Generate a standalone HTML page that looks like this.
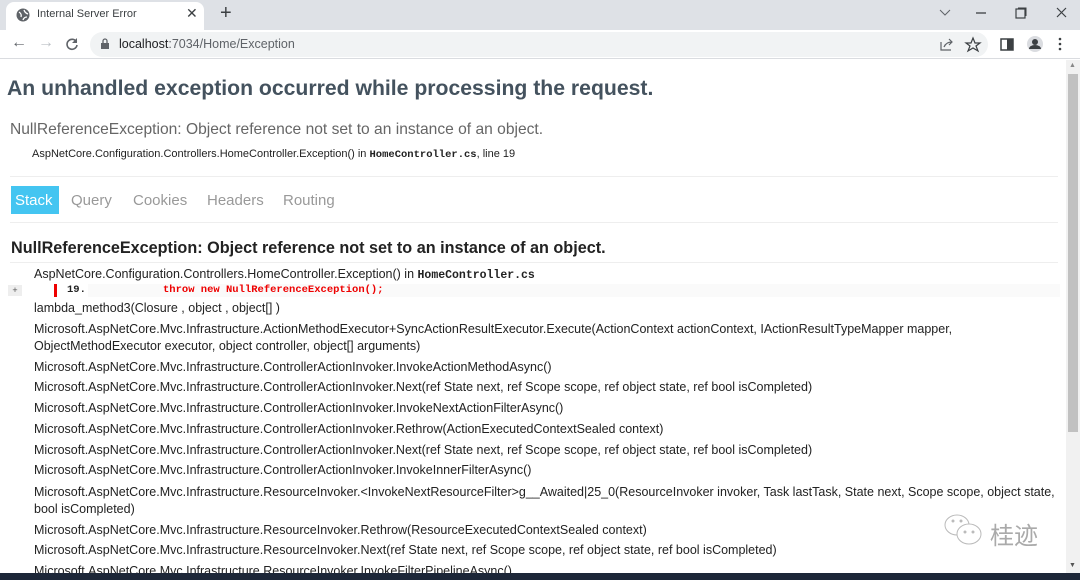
<!DOCTYPE html>
<html><head><meta charset="utf-8"><style>
*{margin:0;padding:0;box-sizing:border-box}
body{width:1080px;height:580px;overflow:hidden;background:#fff;font-family:"Liberation Sans",sans-serif;position:relative}
.tabbar{position:absolute;left:0;top:0;width:1080px;height:30px;background:#dee1e6}
.tab{position:absolute;left:6px;top:2px;width:198px;height:28px;background:#fff;border-radius:8px 8px 0 0}
.toolbar{position:absolute;left:0;top:30px;width:1080px;height:29px;background:#fff;border-bottom:1px solid #dadce0}
.pill{position:absolute;left:90px;top:2px;width:898px;height:25px;background:#f1f3f4;border-radius:13px}
.t{position:absolute;white-space:nowrap}
.sb{position:absolute;left:1066px;top:60px;width:14px;height:513px;background:#f1f1f1}
.thumb{position:absolute;left:1068px;top:74px;width:10px;height:358px;background:#c1c1c1}
.bottom{position:absolute;left:0;top:573px;width:1080px;height:7px;background:#1d2738}
.st{position:absolute;left:34px;font-size:12.5px;color:#222;white-space:nowrap}
.hr{position:absolute;left:10px;width:1048px;height:1px;background:#eee}
.mono{font-family:"Liberation Mono",monospace;font-weight:bold;font-size:11.5px}
</style></head><body>
<div class="tabbar"><div class="tab"></div>
<svg class="t" style="left:16px;top:8px" width="14" height="14" viewBox="0 0 14 14"><circle cx="7" cy="7" r="6.5" fill="#5f6368"/><path d="M3 4 Q6 6 5 9 M8 2 Q9 5 12 6 M7 12 Q8 9 11 9" stroke="#fff" stroke-width="1.3" fill="none"/></svg>
<div class="t" style="left:37px;top:8px;font-size:11px;color:#3c4043">Internal Server Error</div>
<div class="t" style="left:186px;top:5px;font-size:14px;color:#3c4043">✕</div>
<div class="t" style="left:220px;top:2px;font-size:20px;color:#3c4043">+</div>
<svg class="t" style="left:938px;top:6px" width="140" height="14"><path d="M2 4l5 5 5-5" stroke="#5f6368" fill="none"/><path d="M38 7h10" stroke="#3c4043" stroke-width="1.3"/><rect x="78" y="3" width="9" height="9" stroke="#3c4043" fill="none" stroke-width="1.2"/><path d="M80 2h8v8" stroke="#3c4043" fill="none"/><path d="M119 2l9 9M128 2l-9 9" stroke="#3c4043" stroke-width="1.2"/></svg>
</div>
<div class="toolbar"><div class="pill"></div>
<div class="t" style="left:11px;top:4px;font-size:16px;color:#5f6368">←</div>
<div class="t" style="left:38px;top:4px;font-size:16px;color:#bdc1c6">→</div>
<svg class="t" style="left:65px;top:7px" width="14" height="14"><path d="M11.5 5A5 5 0 1 0 12 8" stroke="#5f6368" stroke-width="1.6" fill="none"/><path d="M12 1v5H7" fill="#5f6368"/></svg>
<svg class="t" style="left:100px;top:8px" width="10" height="12"><rect x="1" y="5" width="8" height="6" fill="#5f6368"/><path d="M3 5V3a2 2 0 014 0v2" stroke="#5f6368" fill="none" stroke-width="1.3"/></svg>
<div class="t" style="left:119px;top:7px;font-size:12.5px;color:#202124">localhost<span style="color:#5f6368">:7034/Home/Exception</span></div>
<svg class="t" style="left:938px;top:6px" width="140" height="18"><path d="M3 6v8h10" stroke="#5f6368" fill="none" stroke-width="1.2"/><path d="M6 11q2-5 8-5M11 3l3 3-3 3" stroke="#5f6368" fill="none" stroke-width="1.2"/><path d="M35 2l2 5h5l-4 3 2 5-5-3-5 3 2-5-4-3h5z" stroke="#3c4043" fill="none" stroke-width="1.2"/><rect x="63" y="3" width="12" height="11" stroke="#3c4043" fill="none" stroke-width="1.5"/><rect x="69" y="3" width="6" height="11" fill="#3c4043"/><circle cx="97" cy="8" r="8" fill="#dadce0"/><circle cx="97" cy="6" r="3" fill="#3c4043"/><path d="M91 13a6 4 0 0112 0z" fill="#3c4043"/><circle cx="122" cy="3" r="1.3" fill="#3c4043"/><circle cx="122" cy="8" r="1.3" fill="#3c4043"/><circle cx="122" cy="13" r="1.3" fill="#3c4043"/></svg>
</div>
<div class="t" style="left:7px;top:77px;font-size:21.2px;font-weight:bold;color:#44525e">An unhandled exception occurred while processing the request.</div>
<div class="t" style="left:10px;top:121px;font-size:15.6px;color:#666">NullReferenceException: Object reference not set to an instance of an object.</div>
<div class="t" style="left:32px;top:148px;font-size:11px;color:#222">AspNetCore.Configuration.Controllers.HomeController.Exception() in <span class="mono" style="font-size:10.5px">HomeController.cs</span>, line 19</div>
<div class="hr" style="top:176px"></div>
<div class="t" style="left:11px;top:186px;width:48px;height:28px;background:#44c5f1"></div>
<div class="t" style="left:15px;top:192px;font-size:15px;color:#fff">Stack</div>
<div class="t" style="left:71px;top:192px;font-size:15px;color:#999">Query</div>
<div class="t" style="left:133px;top:192px;font-size:15px;color:#999">Cookies</div>
<div class="t" style="left:207px;top:192px;font-size:15px;color:#999">Headers</div>
<div class="t" style="left:283px;top:192px;font-size:15px;color:#999">Routing</div>
<div class="hr" style="top:222px"></div>
<div class="t" style="left:11px;top:239px;font-size:16.2px;font-weight:bold;color:#222">NullReferenceException: Object reference not set to an instance of an object.</div>
<div class="hr" style="top:262px"></div>
<div class="st" style="top:267px">AspNetCore.Configuration.Controllers.HomeController.Exception() in <span class="mono">HomeController.cs</span></div>
<div class="t" style="left:8px;top:285px;width:14px;height:11px;background:#eee;font-size:9px;color:#555;text-align:center;line-height:11px">+</div>
<div class="t" style="left:88px;top:284px;width:972px;height:13px;background:#fafafa"></div>
<div class="t" style="left:54px;top:284px;width:3px;height:13px;background:#e00"></div>
<div class="t mono" style="left:67px;top:284px;color:#222;font-size:10.5px">19.</div>
<div class="t mono" style="left:163px;top:284px;color:#e00;font-size:10.5px">throw new NullReferenceException();</div>
<div class="st" style="top:301px">lambda_method3(Closure , object , object[] )</div>
<div class="st" style="top:321px;line-height:17px">Microsoft.AspNetCore.Mvc.Infrastructure.ActionMethodExecutor+SyncActionResultExecutor.Execute(ActionContext actionContext, IActionResultTypeMapper mapper,<br>ObjectMethodExecutor executor, object controller, object[] arguments)</div>
<div class="st" style="top:360px">Microsoft.AspNetCore.Mvc.Infrastructure.ControllerActionInvoker.InvokeActionMethodAsync()</div>
<div class="st" style="top:380px">Microsoft.AspNetCore.Mvc.Infrastructure.ControllerActionInvoker.Next(ref State next, ref Scope scope, ref object state, ref bool isCompleted)</div>
<div class="st" style="top:401px">Microsoft.AspNetCore.Mvc.Infrastructure.ControllerActionInvoker.InvokeNextActionFilterAsync()</div>
<div class="st" style="top:422px">Microsoft.AspNetCore.Mvc.Infrastructure.ControllerActionInvoker.Rethrow(ActionExecutedContextSealed context)</div>
<div class="st" style="top:443px">Microsoft.AspNetCore.Mvc.Infrastructure.ControllerActionInvoker.Next(ref State next, ref Scope scope, ref object state, ref bool isCompleted)</div>
<div class="st" style="top:463px">Microsoft.AspNetCore.Mvc.Infrastructure.ControllerActionInvoker.InvokeInnerFilterAsync()</div>
<div class="st" style="top:484px;line-height:17px">Microsoft.AspNetCore.Mvc.Infrastructure.ResourceInvoker.&lt;InvokeNextResourceFilter&gt;g__Awaited|25_0(ResourceInvoker invoker, Task lastTask, State next, Scope scope, object state,<br>bool isCompleted)</div>
<div class="st" style="top:523px">Microsoft.AspNetCore.Mvc.Infrastructure.ResourceInvoker.Rethrow(ResourceExecutedContextSealed context)</div>
<div class="st" style="top:543px">Microsoft.AspNetCore.Mvc.Infrastructure.ResourceInvoker.Next(ref State next, ref Scope scope, ref object state, ref bool isCompleted)</div>
<div class="st" style="top:564px">Microsoft.AspNetCore.Mvc.Infrastructure.ResourceInvoker.InvokeFilterPipelineAsync()</div>
<svg class="t" style="left:943px;top:512px" width="44" height="36"><ellipse cx="14" cy="13" rx="12" ry="10" fill="#fff" stroke="#bbb"/><ellipse cx="26" cy="22" rx="12" ry="10" fill="#fff" stroke="#bbb"/><circle cx="10" cy="9" r="1.5" fill="#bbb"/><circle cx="18" cy="9" r="1.5" fill="#bbb"/><circle cx="22" cy="20" r="1.5" fill="#bbb"/><circle cx="30" cy="20" r="1.5" fill="#bbb"/></svg>
<div class="t" style="left:990px;top:516px;font-size:24px;color:#aaa;font-family:'Liberation Sans','Noto Sans CJK SC',sans-serif">桂迹</div>
<div class="sb"></div><div class="thumb"></div>
<div class="t" style="left:1069px;top:62px;font-size:7px;color:#888">▲</div>
<div class="t" style="left:1069px;top:562px;font-size:7px;color:#555">▼</div>
<div class="bottom"></div>
</body></html>
